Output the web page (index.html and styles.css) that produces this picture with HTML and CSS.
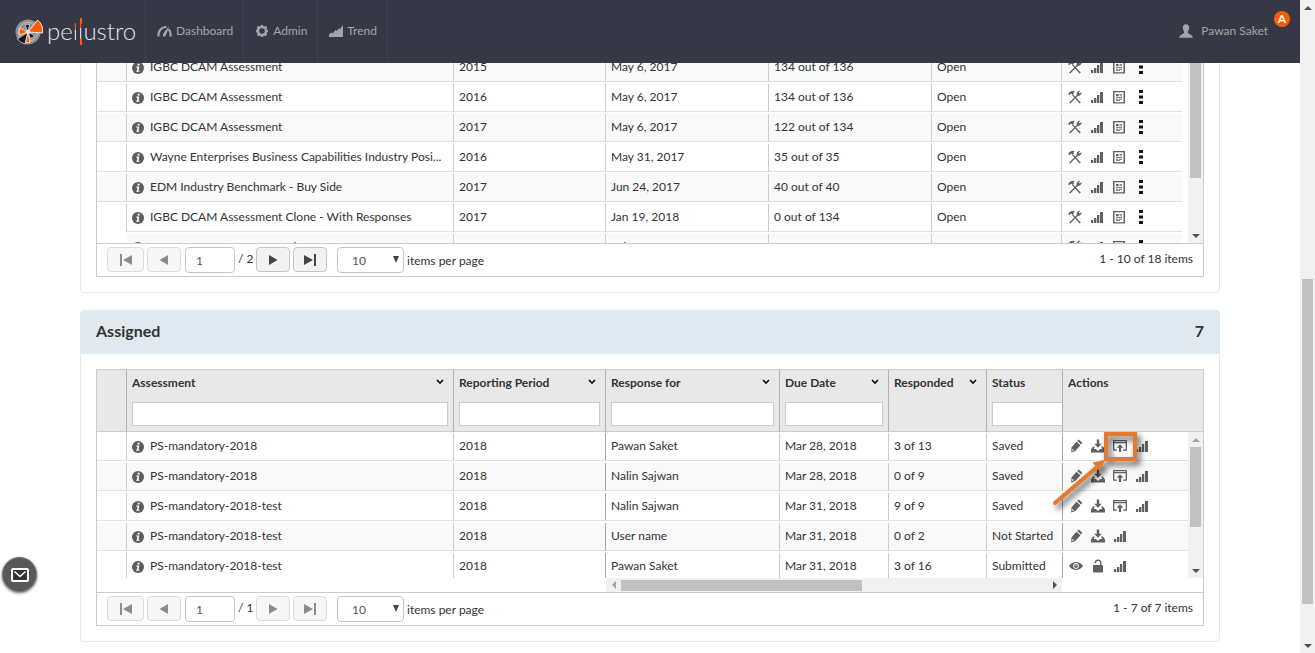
FILE: index.html
```html
<!DOCTYPE html>
<html lang="en">
  <head>
    <meta charset="utf-8">
    <title>pellustro</title>
    <link rel="stylesheet" href="styles.css">
  </head>
  <body>
    <!-- icon set -->
    <svg class="sprite" aria-hidden="true">
      <symbol id="i-info" viewBox="0 0 12 12"><circle cx="6" cy="6" r="6"/><path fill="#fff" d="M5.6 1.8h2v1.7h-2zM4.2 4.6h3.1L6.5 8.8h1v1H4.2v-1h.7l.6-3.2H4.2z"/></symbol>
      <symbol id="i-tools" viewBox="0 0 14 14"><path d="M.2 4.2C1 2.200 2.800.800 5.600.800L6.600 1.300 5.400 2.200 6 3.600 4.600 4.800 3.300 3.800 2.300 4 1.600 5.200z"/><path d="M4.800 4.200 12.800 12.400 11.600 13.600 4 5z"/><path d="M1.200 12.600 8.600 5.200 8.900 2.600 11.200.600 12 .900 10.800 2.500 11.600 3.500 13.400 2.300 13.700 3.200 11.900 5.400 9.700 6.100 2.200 13.600z"/></symbol>
      <symbol id="i-bars" viewBox="0 0 14 14"><path d="M1 10h2v3H1zM4 8h2v5H4zM7 5h2v8H7zM10 2h3v11h-3z"/><path opacity=".5" d="M3 10h.5v3H3zM6 8h.7v5H6zM9 5h.5v8H9z"/></symbol>
      <symbol id="i-report" viewBox="0 0 14 14"><path fill-rule="evenodd" d="M1 1h12v12.500H1zM2.500 2.300v9.900h9V2.300z"/><path d="M4 4h2.500v2.200H4zM7.500 4H10v.800H7.500zM7.500 5.400H10v.800H7.500zM4 7.200h6v.900H4zM4 8.800h2v.900H4zM7 8.800h3v.900H7zM4 10.300h4v.800H4z"/></symbol>
      <symbol id="i-dots" viewBox="0 0 14 14"><path d="M5 0h4v3H5zM5 5.500h4v3H5zM5 11h4v3H5z"/></symbol>
      <symbol id="i-pencil" viewBox="0 0 14 14"><path d="M7.400 2.800 11.500 6.300 6.300 12 2.200 13.400 2.500 8.600z"/><path d="M8.200 2 9.600.500 12.900 3.200 12.900 4.600 12.200 5.400z"/><path fill="#fff" d="M3.400 9.800 5.100 11.300 3.300 12z"/></symbol>
      <symbol id="i-download" viewBox="0 0 14 14"><path d="M5.800.500h2.400v4.300h2.600L7 8.800 3.200 4.800h2.600z"/><path d="M2 7.500h1.800l-1 2.400h2.400c.500 2 3.100 2 3.600 0h2.400l-1-2.400H12l2 3v3H0v-3z"/></symbol>
      <symbol id="i-upload" viewBox="0 0 14 14"><path fill-rule="evenodd" d="M0 1.500 1 1h12l1 .500V11.800h-4v-1.300h2.700V4.200H1.300v6.300H4v1.300H0zM1.300 2.200v.800h11.400v-.800z"/><path d="M7 5.200 10.300 8.800H8.100V13H5.900V8.800H3.700z"/></symbol>
      <symbol id="i-eye" viewBox="0 0 14 14"><path fill-rule="evenodd" d="M0 7C3.500 1.600 10.500 1.600 14 7 10.500 12.200 3.500 12.200 0 7zM7 4.100a2.900 2.900 0 1 0 .01 0z"/><circle cx="7" cy="7" r="1.900"/><path fill="#fff" d="M6.500 5.800h.900v1.400h-.900z"/></symbol>
      <symbol id="i-lock" viewBox="0 0 14 14"><rect x="2" y="6" width="10" height="7.500" rx="1"/><path fill="none" stroke="currentColor" stroke-width="1.300" d="M4.200 4.200C4.300 .100 9.700 .100 9.800 3.800V6"/></symbol>
      <symbol id="i-chevron" viewBox="0 0 8 6"><path fill="none" stroke="currentColor" stroke-width="1.700" d="M1 1 4 4 7 1"/></symbol>
      <symbol id="i-first" viewBox="0 0 14 12"><path d="M1 0h2v12H1zM13 1v10L4 6z"/></symbol>
      <symbol id="i-prev" viewBox="0 0 14 12"><path d="M11 1v10L2.500 6z"/></symbol>
      <symbol id="i-next" viewBox="0 0 14 12"><path d="M3 1v10L11.500 6z"/></symbol>
      <symbol id="i-last" viewBox="0 0 14 12"><path d="M11 0h2v12h-2zM1 1v10L10 6z"/></symbol>
    </svg>

    <div class="page">
      <header class="topbar">
        <a class="brand" href="#">
          <svg width="28" height="28" viewBox="0 0 28 28" aria-hidden="true">
            <circle cx="13" cy="15" r="12.500" fill="#8d8f94"/>
            <circle cx="13" cy="15" r="9.500" fill="none" stroke="#c4c5c8"/>
            <path fill="#15171c" stroke="#ddd" stroke-width=".8" d="M13 15 10 8A7 7 0 0 1 14.500 7.500zM13 15 15.500 21.500A8 8 0 0 0 19.500 18.500zM13 15 2.500 22A12 12 0 0 0 10 27z"/>
            <path fill="#ff5a0a" stroke="#eee" d="M13 15 22.500 3A14 14 0 0 1 27.500 16z"/>
            <path fill="#ff5a0a" stroke="#eee" stroke-width=".8" d="M13 15 5 11A9 9 0 0 0 4.500 18zM13 15 10.500 25.500A11 11 0 0 0 15 25.500z"/>
            <circle cx="13" cy="15" r="2" fill="#eee"/>
          </svg>
          <span class="wordmark">pe<i class="bar-top">l</i><i class="bar-both">l</i>ustro</span>
        </a>
        <nav class="nav">
          <a href="#"><svg width="15" height="14" viewBox="0 0 15 14"><path fill="none" stroke="currentColor" stroke-width="2.200" d="M1.500 12.500C1 7 4 3 9.500 3M11.500 5.200C13.500 7 14 9.500 13.500 12.500"/><path d="M6 12.500C5.500 10 8 6.500 12 2.500 10.500 7 9.500 10.500 8 12.500z"/></svg>Dashboard</a>
          <a href="#"><svg width="14" height="14" viewBox="0 0 14 14"><circle cx="7" cy="7" r="4" fill="none" stroke="currentColor" stroke-width="2.400"/><path fill="none" stroke="currentColor" stroke-width="2.400" d="M7 1v2M7 11v2M1 7h2M11 7h2M2.500 2.500 4 4M10 10l1.500 1.500M2.500 11.500 4 10M10 4l1.500-1.500"/></svg>Admin</a>
          <a href="#"><svg width="14" height="14" viewBox="0 0 14 14"><path d="M0 13v-2.500L2.500 8.500 4 9.300 6.500 6 8 7 10 4.300 11 5 14 1v12z"/></svg>Trend</a>
        </nav>
        <a class="user" href="#">
          <svg width="14" height="14" viewBox="0 0 14 14"><path d="M7 .300C9.500.300 10.300 2 10.100 4.200 9.900 6.300 8.800 7.200 8.800 8.500 9 10.300 13.600 10.300 13.800 13.700H.200C.400 10.300 5 10.300 5.200 8.500 5.200 7.200 4.100 6.300 3.900 4.200 3.700 2 4.500.300 7 .300z"/></svg>Pawan Saket
          <span class="badge">A</span>
        </a>
      </header>

      <main class="content">
        <section class="panel panel-cut">
          <div class="grid">
            <div class="grid-body">
              <div class="rows">
                <table class="created">
                  <colgroup><col class="c-mark"><col><col class="c-period"><col class="c-wide"><col class="c-wide"><col class="c-open"><col class="c-tools"></colgroup>
                  <tbody>
                    <tr>
                      <td></td>
                      <td><span class="name"><svg class="info"><use href="#i-info"/></svg><span>IGBC DCAM Assessment</span></span></td>
                      <td>2015</td><td>May 6, 2017</td><td>134 out of 136</td><td>Open</td>
                      <td><div class="actions"><a href="#" aria-label="Configure"><svg><use href="#i-tools"/></svg></a><a href="#" aria-label="Chart"><svg><use href="#i-bars"/></svg></a><a href="#" aria-label="Report"><svg><use href="#i-report"/></svg></a><a class="more" href="#" aria-label="More"><svg><use href="#i-dots"/></svg></a></div></td>
                    </tr>
                    <tr>
                      <td></td>
                      <td><span class="name"><svg class="info"><use href="#i-info"/></svg><span>IGBC DCAM Assessment</span></span></td>
                      <td>2016</td><td>May 6, 2017</td><td>134 out of 136</td><td>Open</td>
                      <td><div class="actions"><a href="#" aria-label="Configure"><svg><use href="#i-tools"/></svg></a><a href="#" aria-label="Chart"><svg><use href="#i-bars"/></svg></a><a href="#" aria-label="Report"><svg><use href="#i-report"/></svg></a><a class="more" href="#" aria-label="More"><svg><use href="#i-dots"/></svg></a></div></td>
                    </tr>
                    <tr>
                      <td></td>
                      <td><span class="name"><svg class="info"><use href="#i-info"/></svg><span>IGBC DCAM Assessment</span></span></td>
                      <td>2017</td><td>May 6, 2017</td><td>122 out of 134</td><td>Open</td>
                      <td><div class="actions"><a href="#" aria-label="Configure"><svg><use href="#i-tools"/></svg></a><a href="#" aria-label="Chart"><svg><use href="#i-bars"/></svg></a><a href="#" aria-label="Report"><svg><use href="#i-report"/></svg></a><a class="more" href="#" aria-label="More"><svg><use href="#i-dots"/></svg></a></div></td>
                    </tr>
                    <tr>
                      <td></td>
                      <td><span class="name"><svg class="info"><use href="#i-info"/></svg><span>Wayne Enterprises Business Capabilities Industry Posi...</span></span></td>
                      <td>2016</td><td>May 31, 2017</td><td>35 out of 35</td><td>Open</td>
                      <td><div class="actions"><a href="#" aria-label="Configure"><svg><use href="#i-tools"/></svg></a><a href="#" aria-label="Chart"><svg><use href="#i-bars"/></svg></a><a href="#" aria-label="Report"><svg><use href="#i-report"/></svg></a><a class="more" href="#" aria-label="More"><svg><use href="#i-dots"/></svg></a></div></td>
                    </tr>
                    <tr>
                      <td></td>
                      <td><span class="name"><svg class="info"><use href="#i-info"/></svg><span>EDM Industry Benchmark - Buy Side</span></span></td>
                      <td>2017</td><td>Jun 24, 2017</td><td>40 out of 40</td><td>Open</td>
                      <td><div class="actions"><a href="#" aria-label="Configure"><svg><use href="#i-tools"/></svg></a><a href="#" aria-label="Chart"><svg><use href="#i-bars"/></svg></a><a href="#" aria-label="Report"><svg><use href="#i-report"/></svg></a><a class="more" href="#" aria-label="More"><svg><use href="#i-dots"/></svg></a></div></td>
                    </tr>
                    <tr>
                      <td class="open-end"></td>
                      <td><span class="name"><svg class="info"><use href="#i-info"/></svg><span>IGBC DCAM Assessment Clone - With Responses</span></span></td>
                      <td>2017</td><td>Jan 19, 2018</td><td>0 out of 134</td><td>Open</td>
                      <td><div class="actions"><a href="#" aria-label="Configure"><svg><use href="#i-tools"/></svg></a><a href="#" aria-label="Chart"><svg><use href="#i-bars"/></svg></a><a href="#" aria-label="Report"><svg><use href="#i-report"/></svg></a><a class="more" href="#" aria-label="More"><svg><use href="#i-dots"/></svg></a></div></td>
                    </tr>
                    <tr>
                      <td class="blank"></td>
                      <td><span class="name"><svg class="info"><use href="#i-info"/></svg><span>IGBC DCAM Assessment Clone</span></span></td>
                      <td>2017</td><td>Feb 5, 2018</td><td>0 out of 134</td><td>Open</td>
                      <td><div class="actions"><a href="#" aria-label="Configure"><svg><use href="#i-tools"/></svg></a><a href="#" aria-label="Chart"><svg><use href="#i-bars"/></svg></a><a href="#" aria-label="Report"><svg><use href="#i-report"/></svg></a><a class="more" href="#" aria-label="More"><svg><use href="#i-dots"/></svg></a></div></td>
                    </tr>
                  </tbody>
                </table>
              </div>
              <div class="vscroll vscroll-end"><span class="thumb"></span><span class="arrow down"></span></div>
            </div>
            <div class="pager">
              <button type="button" class="wide" aria-label="First page" disabled><svg><use href="#i-first"/></svg></button>
              <button type="button" aria-label="Previous page" disabled><svg><use href="#i-prev"/></svg></button>
              <input type="text" value="1" aria-label="Page">
              <span class="of">/ 2</span>
              <button type="button" aria-label="Next page"><svg><use href="#i-next"/></svg></button>
              <button type="button" aria-label="Last page"><svg><use href="#i-last"/></svg></button>
              <div class="size"><select id="size-created"><option>10</option><option>20</option></select></div>
              <label for="size-created">items per page</label>
              <span class="count">1 - 10 of 18 items</span>
            </div>
          </div>
        </section>

        <section class="panel">
          <div class="panel-head"><h2>Assigned</h2><span>7</span></div>
          <div class="grid">
            <table class="assigned head">
              <colgroup><col class="c-mark"><col><col class="c-period"><col class="c-for"><col class="c-due"><col class="c-resp"><col class="c-status"><col class="c-acts"></colgroup>
              <thead>
                <tr>
                  <th></th>
                  <th><div class="title">Assessment<svg><use href="#i-chevron"/></svg></div><input type="text" aria-label="Filter assessment"></th>
                  <th><div class="title">Reporting Period<svg><use href="#i-chevron"/></svg></div><input type="text" aria-label="Filter reporting period"></th>
                  <th><div class="title">Response for<svg><use href="#i-chevron"/></svg></div><input type="text" aria-label="Filter response for"></th>
                  <th><div class="title">Due Date<svg><use href="#i-chevron"/></svg></div><input type="text" aria-label="Filter due date"></th>
                  <th><div class="title">Responded<svg><use href="#i-chevron"/></svg></div></th>
                  <th class="clip"><div class="title">Status</div><input type="text" aria-label="Filter status"></th>
                  <th><div class="title">Actions</div></th>
                </tr>
              </thead>
            </table>
            <div class="grid-body">
              <div class="rows">
                <table class="assigned">
                  <colgroup><col class="c-mark"><col><col class="c-period"><col class="c-for"><col class="c-due"><col class="c-resp"><col class="c-status"><col class="c-acts-body"></colgroup>
                  <tbody>
                    <tr>
                      <td></td>
                      <td><span class="name"><svg class="info"><use href="#i-info"/></svg><span>PS-mandatory-2018</span></span></td>
                      <td>2018</td><td>Pawan Saket</td><td>Mar 28, 2018</td><td>3 of 13</td><td>Saved</td>
                      <td><div class="actions"><a href="#" aria-label="Edit"><svg><use href="#i-pencil"/></svg></a><a href="#" aria-label="Download"><svg><use href="#i-download"/></svg></a><a class="marked" href="#" aria-label="Upload"><svg><use href="#i-upload"/></svg>
                        <svg class="callout" width="100" height="90" viewBox="0 0 100 90" aria-hidden="true"><g class="callout-shape"><rect x="57" y="7" width="29" height="25" fill="none" stroke="#e57a2f" stroke-width="4"/><path fill="none" stroke="#e57a2f" stroke-width="4" stroke-linecap="round" d="M6 76 48 40"/><path fill="#e57a2f" d="M56 33 51 44 43.500 35.500z"/></g></svg>
                      </a><a href="#" aria-label="Chart"><svg><use href="#i-bars"/></svg></a></div></td>
                    </tr>
                    <tr>
                      <td></td>
                      <td><span class="name"><svg class="info"><use href="#i-info"/></svg><span>PS-mandatory-2018</span></span></td>
                      <td>2018</td><td>Nalin Sajwan</td><td>Mar 28, 2018</td><td>0 of 9</td><td>Saved</td>
                      <td><div class="actions"><a href="#" aria-label="Edit"><svg><use href="#i-pencil"/></svg></a><a href="#" aria-label="Download"><svg><use href="#i-download"/></svg></a><a href="#" aria-label="Upload"><svg><use href="#i-upload"/></svg></a><a href="#" aria-label="Chart"><svg><use href="#i-bars"/></svg></a></div></td>
                    </tr>
                    <tr>
                      <td></td>
                      <td><span class="name"><svg class="info"><use href="#i-info"/></svg><span>PS-mandatory-2018-test</span></span></td>
                      <td>2018</td><td>Nalin Sajwan</td><td>Mar 31, 2018</td><td>9 of 9</td><td>Saved</td>
                      <td><div class="actions"><a href="#" aria-label="Edit"><svg><use href="#i-pencil"/></svg></a><a href="#" aria-label="Download"><svg><use href="#i-download"/></svg></a><a href="#" aria-label="Upload"><svg><use href="#i-upload"/></svg></a><a href="#" aria-label="Chart"><svg><use href="#i-bars"/></svg></a></div></td>
                    </tr>
                    <tr>
                      <td></td>
                      <td><span class="name"><svg class="info"><use href="#i-info"/></svg><span>PS-mandatory-2018-test</span></span></td>
                      <td>2018</td><td>User name</td><td>Mar 31, 2018</td><td>0 of 2</td><td>Not Started</td>
                      <td><div class="actions"><a href="#" aria-label="Edit"><svg><use href="#i-pencil"/></svg></a><a href="#" aria-label="Download"><svg><use href="#i-download"/></svg></a><a href="#" aria-label="Chart"><svg><use href="#i-bars"/></svg></a></div></td>
                    </tr>
                    <tr>
                      <td></td>
                      <td><span class="name"><svg class="info"><use href="#i-info"/></svg><span>PS-mandatory-2018-test</span></span></td>
                      <td>2018</td><td>Pawan Saket</td><td>Mar 31, 2018</td><td>3 of 16</td><td>Submitted</td>
                      <td><div class="actions"><a href="#" aria-label="View"><svg><use href="#i-eye"/></svg></a><a href="#" aria-label="Unlock"><svg><use href="#i-lock"/></svg></a><a href="#" aria-label="Chart"><svg><use href="#i-bars"/></svg></a></div></td>
                    </tr>
                  </tbody>
                </table>
              </div>
              <div class="vscroll"><span class="arrow up off"></span><span class="thumb"></span><span class="arrow down"></span></div>
            </div>
            <div class="hscroll-row"><div class="hscroll"><span class="arrow left off"></span><span class="thumb"></span><span class="arrow right"></span></div></div>
            <div class="pager">
              <button type="button" class="wide" aria-label="First page" disabled><svg><use href="#i-first"/></svg></button>
              <button type="button" aria-label="Previous page" disabled><svg><use href="#i-prev"/></svg></button>
              <input type="text" value="1" aria-label="Page">
              <span class="of">/ 1</span>
              <button type="button" aria-label="Next page" disabled><svg><use href="#i-next"/></svg></button>
              <button type="button" aria-label="Last page" disabled><svg><use href="#i-last"/></svg></button>
              <div class="size"><select id="size-assigned"><option>10</option><option>20</option></select></div>
              <label for="size-assigned">items per page</label>
              <span class="count">1 - 7 of 7 items</span>
            </div>
          </div>
        </section>
      </main>
    </div>

    <div class="page-scroll"><span class="arrow up"></span><div class="track"><span class="thumb"></span></div><span class="arrow down"></span></div>

    <button type="button" class="mail" aria-label="Contact us">
      <svg width="18" height="14" viewBox="0 0 18 14"><rect x="1" y="1" width="16" height="12" rx="1" fill="#333" stroke="#fff" stroke-width="2"/><path fill="none" stroke="#fff" stroke-width="1.600" d="M3.500 3.500 9 8.500 14.500 3.500"/></svg>
    </button>
  </body>
</html>
```
FILE: styles.css
```css
* {
  box-sizing: border-box;
}
body {
  margin: 0;
  height: 100vh;
  display: flex;
  overflow: hidden;
  font-family: Lato, 'Liberation Sans', sans-serif;
  font-size: 12px;
  line-height: 20px;
  color: #333;
  background: #fff;
}
svg {
  fill: currentColor;
  display: block;
  flex: none;
}
a {
  color: inherit;
  text-decoration: none;
}
.sprite {
  position: absolute;
  width: 0;
  height: 0;
}
.page {
  flex: 1;
  min-width: 0;
  display: flex;
  flex-direction: column;
}

/* top bar */
.topbar {
  flex: none;
  height: 63px;
  display: flex;
  background: #363945;
  color: #a2a5ad;
}
.brand {
  width: 145px;
  padding: 0 0 2px 15px;
  display: flex;
  align-items: center;
  gap: 4px;
}
.wordmark {
  font-size: 24px;
  font-weight: 300;
  line-height: 40px;
  color: #e4e4e6;
}
.wordmark i {
  font-style: normal;
  -webkit-background-clip: text;
  background-clip: text;
  color: transparent;
}
.bar-top {
  background-image: linear-gradient(#ff5a0a 50%, #e4e4e6 50%);
}
.bar-both {
  position: relative;
  background-image: linear-gradient(#ff5a0a 40%, #e4e4e6 40%);
}
.bar-both::before,
.bar-both::after {
  content: '';
  position: absolute;
  left: 2px;
  width: 2px;
  height: 6px;
  background: #ff5a0a;
}
.bar-both::before {
  top: 2px;
}
.bar-both::after {
  bottom: 0;
}
.nav {
  display: flex;
}
.nav a {
  display: flex;
  align-items: center;
  gap: 4px;
  padding: 0 10px 2px 11px;
  border-left: 1px solid #40434f;
}
.nav a:last-child {
  border-right: 1px solid #40434f;
}
.user {
  position: relative;
  margin-left: auto;
  padding: 0 32px 2px 0;
  display: flex;
  align-items: center;
  gap: 8px;
}
.badge {
  position: absolute;
  top: 11px;
  right: 10px;
  width: 16px;
  border-radius: 8px;
  background: #ff5a00;
  color: #fff;
  font-weight: 700;
  line-height: 16px;
  text-align: center;
}

/* panels */
.content {
  flex: 1;
  min-height: 0;
  overflow: hidden;
  width: 100%;
  max-width: 1140px;
  margin: 0 auto;
}
.panel {
  padding: 0 15px 15px;
  margin-bottom: 17px;
  border: 1px solid #e1e9f0;
  border-radius: 4px;
}
.panel-cut {
  border-top: 0;
  border-radius: 0 0 4px 4px;
}
.panel-head {
  margin: -1px -16px 15px;
  padding: 0 16px 2px;
  display: flex;
  justify-content: space-between;
  align-items: center;
  height: 44px;
  background: #e1e9f0;
  border-radius: 4px 4px 0 0;
  font-size: 16px;
  font-weight: 700;
}
.panel-head h2 {
  margin: 0;
  font-size: 16px;
}
.grid {
  border: 1px solid #ccc;
}
.panel-cut .grid {
  border-top: 0;
}
.grid-body {
  display: flex;
  height: 146px;
  overflow: hidden;
}
.panel-cut .grid-body {
  height: 180px;
}
.rows {
  flex: 1;
  min-width: 0;
}

/* tables */
table {
  width: 100%;
  table-layout: fixed;
  border-collapse: separate;
  border-spacing: 0 2px;
  margin-top: -1px;
}
.created {
  width: calc(100% - 6px);
  margin-top: -11px;
}
.c-mark {
  width: 30px;
}
.c-period {
  width: 152px;
}
.c-wide {
  width: 163px;
}
.c-open {
  width: 130px;
}
.c-tools {
  width: 121px;
}
.c-for {
  width: 174px;
}
.c-due {
  width: 109px;
}
.c-resp {
  width: 98px;
}
.c-status {
  width: 76px;
}
.c-acts {
  width: 141px;
}
.c-acts-body {
  width: 126px;
}
td {
  height: 28px;
  padding: 0 5px 2px;
  border-left: 1px solid #ccc;
  border-bottom: 1px solid #e2e2e2;
  white-space: nowrap;
}
td:first-child {
  border-left: 0;
  border-right: 1px solid #ccc;
}
td:nth-child(2) {
  border-left: 0;
}
.assigned td:nth-child(4),
.assigned td:last-child {
  border-left-color: #a6a6a6;
}
.created tr:nth-child(odd) td,
.assigned tr:nth-child(even) td {
  background: #f9f9f9;
}
.assigned tr:last-child td {
  border-bottom: 0;
}
td.open-end {
  border-bottom: 0;
}
.created tr td.blank {
  background: #fff;
  border-color: #fff;
}
.name {
  display: flex;
  align-items: center;
  gap: 6px;
}
.info {
  width: 12px;
  height: 12px;
  margin-top: 2px;
  color: #5c5c5c;
}
.actions {
  display: flex;
  gap: 8px;
  padding-left: 1px;
  color: #606060;
}
.actions svg {
  width: 14px;
  height: 14px;
}
.actions .more {
  color: #111;
}
.marked {
  position: relative;
}
.actions .callout {
  position: absolute;
  width: 100px;
  height: 90px;
  top: -12px;
  left: -64px;
  overflow: visible;
  pointer-events: none;
}
.callout-shape {
  filter: drop-shadow(3px 4px 3px rgba(0, 0, 0, 0.7));
}

/* column heads */
.head {
  border-spacing: 0;
  margin: 0;
  background: #e8e8e8;
}
th {
  height: 62px;
  padding: 3px 5px 0;
  border-left: 1px solid #b0b0b0;
  border-bottom: 1px solid #ccc;
  text-align: left;
  vertical-align: top;
  font-weight: 700;
}
th:first-child {
  border-left: 0;
  border-right: 1px solid #b0b0b0;
}
th:nth-child(2) {
  border-left: 0;
}
.title {
  display: flex;
  justify-content: space-between;
  align-items: center;
  height: 20px;
  margin-bottom: 9px;
}
.title svg {
  width: 8px;
  height: 6px;
  margin: 0 4px 2px 0;
  color: #111;
}
th input {
  display: block;
  width: 100%;
  height: 24px;
  padding: 0 5px;
  border: 1px solid #ccc;
  background: #fff;
}
th.clip {
  padding-right: 0;
}
.clip input {
  border-right: 0;
}

/* scroll bars */
.vscroll {
  flex: none;
  width: 15px;
  display: flex;
  flex-direction: column;
  align-items: center;
  background: #f1f1f1;
}
.vscroll .thumb {
  width: 11px;
  height: 80px;
  background: #c1c1c1;
}
.vscroll-end .thumb {
  height: 115px;
}
.arrow {
  flex: none;
  width: 15px;
  height: 15px;
  display: flex;
  align-items: center;
  justify-content: center;
}
.vscroll .down {
  margin-top: auto;
}
.arrow::before {
  content: '';
  border: 4px solid transparent;
}
.up::before {
  border-top: 0;
  border-bottom-color: #505050;
}
.down::before {
  border-bottom: 0;
  border-top-color: #505050;
}
.left::before {
  border-left: 0;
  border-right-color: #505050;
}
.right::before {
  border-right: 0;
  border-left-color: #505050;
}
.up.off::before {
  border-bottom-color: #a3a3a3;
}
.left.off::before {
  border-right-color: #a3a3a3;
}
.hscroll-row {
  height: 14px;
  padding-right: 141px;
  display: flex;
  justify-content: flex-end;
}
.hscroll {
  width: 456px;
  display: flex;
  align-items: center;
  background: #f1f1f1;
}
.hscroll .thumb {
  width: 241px;
  height: 11px;
  background: #c1c1c1;
}
.hscroll .right {
  margin-left: auto;
}
.page-scroll {
  flex: none;
  width: 15px;
  display: flex;
  flex-direction: column;
  background: #f1f1f1;
}
.track {
  flex: 1;
  display: flex;
  flex-direction: column;
  justify-content: flex-end;
  align-items: center;
  padding-bottom: 34px;
}
.track .thumb {
  width: 11px;
  height: 325px;
  background: #c1c1c1;
}

/* pager */
.pager {
  display: flex;
  align-items: flex-start;
  padding: 3px 10px;
  height: 33px;
  border-top: 1px solid #ccc;
}
.pager button {
  width: 34px;
  height: 25px;
  margin-right: 3px;
  padding: 0;
  display: flex;
  align-items: center;
  justify-content: center;
  border: 1px solid #c5c5c5;
  border-radius: 4px;
  background: #f3f3f3;
  color: #444;
}
.pager button.wide {
  width: 37px;
}
.pager button:disabled {
  border-color: #dcdcdc;
  background: #f7f7f7;
  color: #8c8c8c;
}
.pager button svg {
  width: 14px;
  height: 12px;
}
.pager input,
.pager select {
  height: 26px;
  border: 1px solid #c5c5c5;
  border-radius: 4px;
  background: #fff;
  color: #555;
  font: inherit;
}
.pager input {
  width: 50px;
  margin-left: 1px;
  padding: 0 10px;
}
.of {
  width: 21px;
  padding-left: 3px;
  line-height: 24px;
  white-space: nowrap;
}
.size {
  position: relative;
  margin: 0 3px 0 7px;
}
.size select {
  display: block;
  width: 67px;
  padding: 2px 14px 0;
  appearance: none;
}
.size::after {
  content: '';
  position: absolute;
  top: 9px;
  right: 5px;
  border: 3px solid transparent;
  border-top: 7px solid #444;
  border-bottom: 0;
  pointer-events: none;
}
.pager label {
  line-height: 28px;
}
.count {
  margin-left: auto;
  line-height: 24px;
}

.mail {
  position: fixed;
  left: 2px;
  bottom: 61px;
  width: 35px;
  height: 35px;
  padding: 0;
  display: flex;
  align-items: center;
  justify-content: center;
  border: 1px solid #777;
  border-radius: 50%;
  background: #585858;
  box-shadow: 0 1px 3px rgba(0, 0, 0, 0.6);
}
```
